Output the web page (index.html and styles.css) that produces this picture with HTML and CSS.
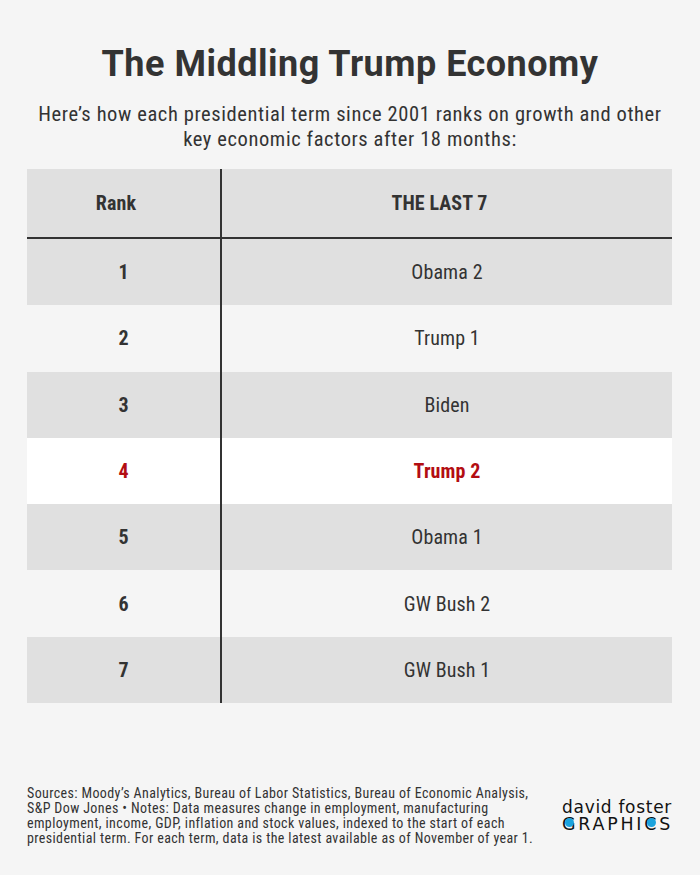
FILE: index.html
```html
<!DOCTYPE html>
<html lang="en">
<head>
<meta charset="utf-8">
<title>The Middling Trump Economy</title>
<link rel="stylesheet" href="styles.css">
</head>
<body>
<div class="page">
  <h1 class="title">The Middling Trump Economy</h1>
  <p class="subtitle">Here’s how each presidential term since 2001 ranks on growth and other key economic factors after 18 months:</p>
  <div class="table">
    <div class="row head">
      <div class="cell rank">Rank</div>
      <div class="cell name">THE LAST 7</div>
    </div>
    <div class="row odd"><div class="cell rank">1</div><div class="cell name">Obama 2</div></div>
    <div class="row even"><div class="cell rank">2</div><div class="cell name">Trump 1</div></div>
    <div class="row odd"><div class="cell rank">3</div><div class="cell name">Biden</div></div>
    <div class="row hl"><div class="cell rank">4</div><div class="cell name">Trump 2</div></div>
    <div class="row odd"><div class="cell rank">5</div><div class="cell name">Obama 1</div></div>
    <div class="row even"><div class="cell rank">6</div><div class="cell name">GW Bush 2</div></div>
    <div class="row odd"><div class="cell rank">7</div><div class="cell name">GW Bush 1</div></div>
  </div>
  <div class="footer">
    <p class="notes">Sources: Moody’s Analytics, Bureau of Labor Statistics, Bureau of Economic Analysis, S&amp;P Dow Jones • Notes: Data measures change in employment, manufacturing employment, income, GDP, inflation and stock values, indexed to the start of each presidential term. For each term, data is the latest available as of November of year 1.</p>
    <div class="logo">
      <div class="logo-top">david foster</div>
      <div class="logo-bottom"><span class="dot">G</span>RAPHI<span class="dot">C</span>S</div>
    </div>
  </div>
</div>
</body>
</html>
```
FILE: styles.css
```css
html, body {
  margin: 0;
  padding: 0;
  background: #f5f5f5;
}
body {
  width: 700px;
  height: 875px;
  overflow: hidden;
  font-family: "Roboto Condensed", "Roboto", "Liberation Sans", sans-serif;
  font-stretch: condensed;
  color: #333;
}
.page {
  padding: 43px 27px 0;
}
.title {
  margin: 0;
  font-family: "Roboto", "Liberation Sans", sans-serif;
  font-stretch: normal;
  font-size: 36px;
  letter-spacing: 0.5px;
  line-height: 42px;
  font-weight: 700;
  text-align: center;
  color: #333;
}
.subtitle {
  margin: 16.5px 0 0;
  font-size: 20.5px;
  letter-spacing: 0.6px;
  line-height: 25px;
  text-align: center;
  color: #333;
}
.table {
  margin-top: 17.5px;
  width: 645px;
}
.row {
  display: grid;
  grid-template-columns: 195px 1fr;
  height: 66.3px;
}
.row.head {
  height: 68px;
  border-bottom: 2px solid #333;
  background: #e0e0e0;
  font-weight: 700;
}
.row.head .cell { padding-right: 15px; }
.row.odd { background: #e0e0e0; }
.row.even { background: #f5f5f5; }
.row.hl { background: #ffffff; color: #b30d12; font-weight: 700; }
.cell {
  display: flex;
  align-items: center;
  justify-content: center;
  font-size: 20px;
  letter-spacing: 0.1px;
}
.cell.rank {
  border-right: 2px solid #333;
  font-weight: 700;
}
.footer {
  margin-top: 83px;
  display: flex;
  align-items: center;
  justify-content: space-between;
}
.notes {
  margin: 0;
  width: 515px;
  font-size: 14px;
  letter-spacing: 0.38px;
  line-height: 15px;
  color: #333;
}
.logo {
  color: #111;
  font-family: "DejaVu Sans", sans-serif;
  font-stretch: normal;
  line-height: 17px;
  margin-right: 1px;
}
.logo-top {
  font-size: 17px;
  letter-spacing: 0.7px;
}
.logo-bottom {
  font-size: 17.4px;
  letter-spacing: 2.8px;
  margin-right: -2.8px;
}
.dot {
  position: relative;
}
.dot::before {
  content: "";
  position: absolute;
  left: 3px;
  top: 4px;
  width: 9px;
  height: 9px;
  border-radius: 50%;
  background: #1ba3dd;
}
```
